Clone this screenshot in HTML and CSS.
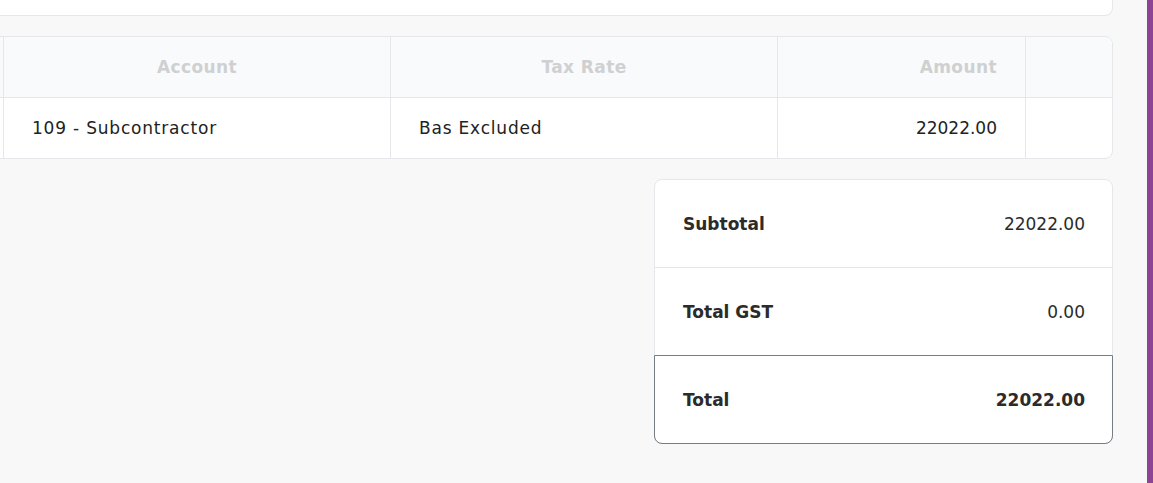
FILE: index.html
```html
<!DOCTYPE html>
<html>
<head>
<meta charset="utf-8">
<link rel="stylesheet" href="styles.css">
</head>
<body>
<div class="page">
  <main class="main">
    <div class="inner">
      <div class="top-card"></div>
      <div class="table-card">
        <div class="row head">
          <div class="cell c0"></div>
          <div class="cell c1 center">Account</div>
          <div class="cell c2 center">Tax Rate</div>
          <div class="cell c3 right">Amount</div>
          <div class="cell c4"></div>
        </div>
        <div class="row body-row">
          <div class="cell c0"></div>
          <div class="cell c1 wide">109 - Subcontractor</div>
          <div class="cell c2 wide">Bas Excluded</div>
          <div class="cell c3 right">22022.00</div>
          <div class="cell c4"></div>
        </div>
      </div>
      <div class="totals-wrap">
        <div class="totals">
          <div class="trow">
            <span class="tlabel">Subtotal</span>
            <span class="tval">22022.00</span>
          </div>
          <div class="trow gst">
            <span class="tlabel">Total GST</span>
            <span class="tval">0.00</span>
          </div>
          <div class="trow total">
            <span class="tlabel">Total</span>
            <span class="tval strong">22022.00</span>
          </div>
        </div>
      </div>
    </div>
  </main>
  <div class="sidebar-edge"></div>
</div>
</body>
</html>
```

FILE: styles.css
```css
* { box-sizing: border-box; }
html, body {
  margin: 0;
  padding: 0;
  height: 100%;
  background: #f8f8f8;
  font-family: "DejaVu Sans", "Open Sans", sans-serif;
  color: #212121;
  overflow: hidden;
}
.page {
  display: flex;
  height: 483px;
  width: 1153px;
}
.main {
  flex: 1;
  overflow: hidden;
  padding-right: 34px;
}
.inner {
  margin-left: -40px;
}
.sidebar-edge {
  width: 6px;
  background: #8e4494;
}
.top-card {
  height: 16px;
  background: #fff;
  border: 1px solid #e5e7eb;
  border-top: none;
  border-radius: 0 0 8px 8px;
}
.table-card {
  margin-top: 20px;
  background: #fff;
  border: 1px solid #e5e7eb;
  border-radius: 8px;
  overflow: hidden;
}
.row {
  display: flex;
  height: 61px;
}
.row.head {
  background: #f9fafb;
  border-bottom: 1px solid #e5e7eb;
  font-weight: 700;
  color: #cfd0d2;
  font-size: 17px;
  letter-spacing: 0.4px;
}
.row.body-row {
  height: 60px;
  font-size: 17px;
  color: #222;
}
.cell {
  display: flex;
  align-items: center;
  padding: 0 28px;
  border-right: 1px solid #e5e7eb;
}
.cell.wide { letter-spacing: 0.8px; }
.cell:last-child { border-right: none; }
.cell.center { justify-content: center; }
.cell.right { justify-content: flex-end; }
.c0 { width: 43px; padding: 0; }
.c1 { width: 387px; }
.c2 { width: 387px; }
.c3 { width: 248px; }
.c4 { flex: 1; }
.totals-wrap {
  display: flex;
  justify-content: flex-end;
  margin-top: 20px;
}
.totals {
  width: 459px;
  background: #fff;
  border: 1px solid #e5e7eb;
  border-radius: 8px;
}
.trow {
  display: flex;
  justify-content: space-between;
  align-items: center;
  height: 88px;
  padding: 0 27px 0 28px;
  border-bottom: 1px solid #e5e7eb;
  font-size: 17px;
}
.trow.gst {
  height: 87px;
  border-bottom: none;
}
.trow.total {
  height: 89px;
  margin: 0 -1px -1px;
  padding: 0 27px 0 28px;
  border: 1px solid #777d84;
  border-radius: 0 0 8px 8px;
}
.tlabel {
  font-weight: 700;
  color: #2b2b2b;
}
.tval { color: #2b2b2b; }
.tval.strong { font-weight: 700; }
```
